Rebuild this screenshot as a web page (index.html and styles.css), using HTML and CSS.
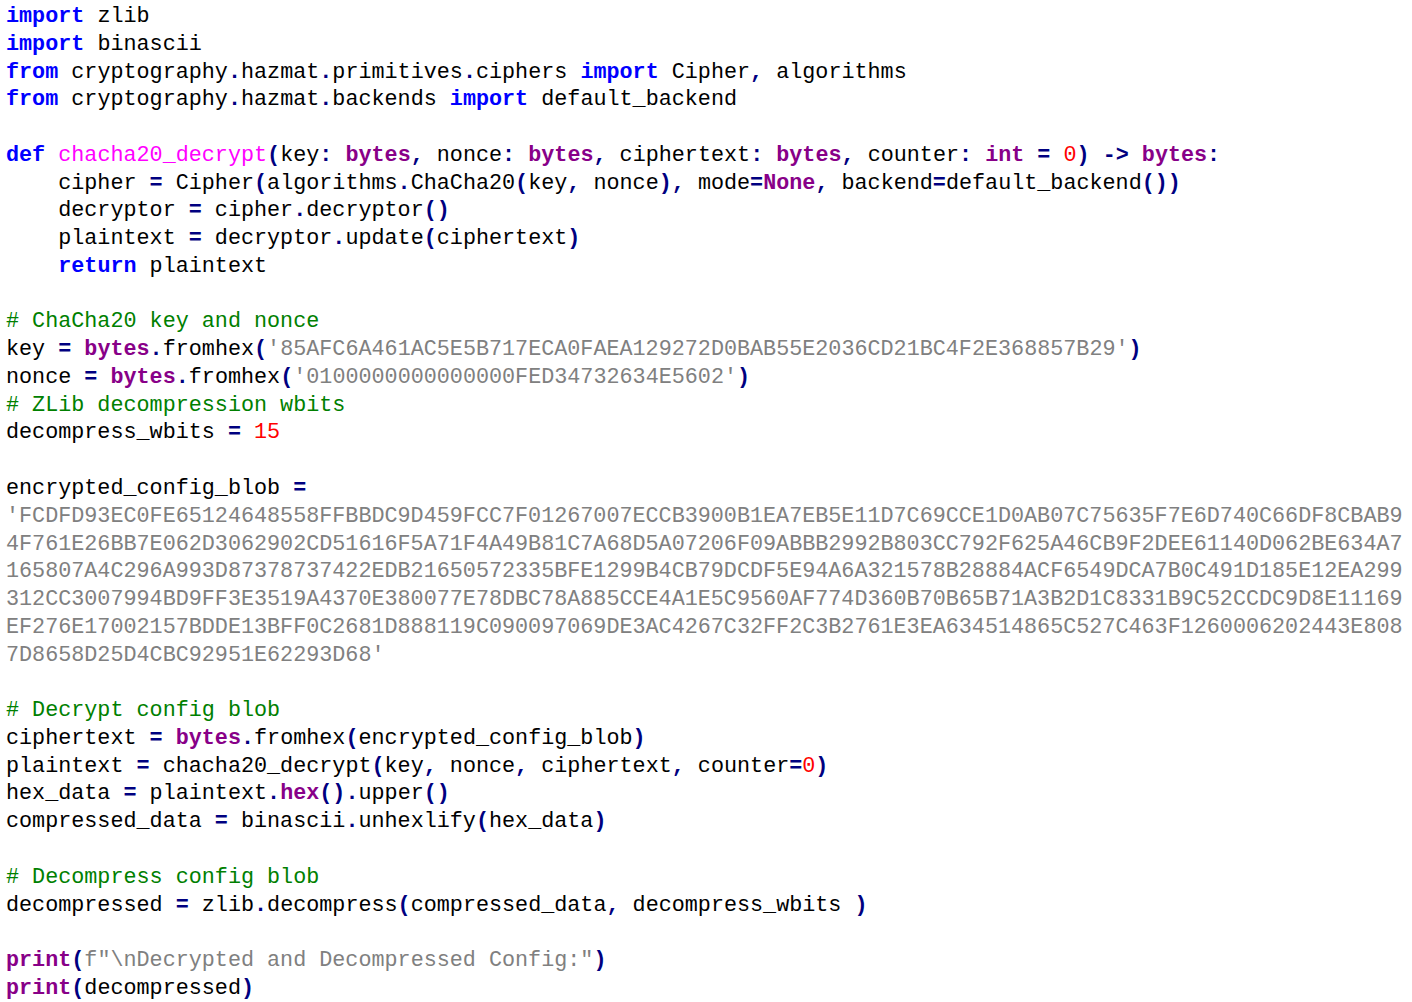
FILE: index.html
```html
<!DOCTYPE html>
<html lang="en">
<head>
<meta charset="utf-8">
<title>chacha20 config decrypt</title>
<link rel="stylesheet" href="styles.css">
</head>
<body>
<pre class="code"><span class="k">import</span> zlib
<span class="k">import</span> binascii
<span class="k">from</span> cryptography<span class="o">.</span>hazmat<span class="o">.</span>primitives<span class="o">.</span>ciphers <span class="k">import</span> Cipher<span class="o">,</span> algorithms
<span class="k">from</span> cryptography<span class="o">.</span>hazmat<span class="o">.</span>backends <span class="k">import</span> default_backend

<span class="k">def</span> <span class="f">chacha20_decrypt</span><span class="o">(</span>key<span class="o">:</span> <span class="b">bytes</span><span class="o">,</span> nonce<span class="o">:</span> <span class="b">bytes</span><span class="o">,</span> ciphertext<span class="o">:</span> <span class="b">bytes</span><span class="o">,</span> counter<span class="o">:</span> <span class="b">int</span> <span class="o">=</span> <span class="n">0</span><span class="o">)</span> <span class="o">-&gt;</span> <span class="b">bytes</span><span class="o">:</span>
    cipher <span class="o">=</span> Cipher<span class="o">(</span>algorithms<span class="o">.</span>ChaCha20<span class="o">(</span>key<span class="o">,</span> nonce<span class="o">),</span> mode<span class="o">=</span><span class="b">None</span><span class="o">,</span> backend<span class="o">=</span>default_backend<span class="o">())</span>
    decryptor <span class="o">=</span> cipher<span class="o">.</span>decryptor<span class="o">()</span>
    plaintext <span class="o">=</span> decryptor<span class="o">.</span>update<span class="o">(</span>ciphertext<span class="o">)</span>
    <span class="k">return</span> plaintext

<span class="c"># ChaCha20 key and nonce</span>
key <span class="o">=</span> <span class="b">bytes</span><span class="o">.</span>fromhex<span class="o">(</span><span class="s">'85AFC6A461AC5E5B717ECA0FAEA129272D0BAB55E2036CD21BC4F2E368857B29'</span><span class="o">)</span>
nonce <span class="o">=</span> <span class="b">bytes</span><span class="o">.</span>fromhex<span class="o">(</span><span class="s">'0100000000000000FED34732634E5602'</span><span class="o">)</span>
<span class="c"># ZLib decompression wbits</span>
decompress_wbits <span class="o">=</span> <span class="n">15</span>

encrypted_config_blob <span class="o">=</span>
<span class="s">'FCDFD93EC0FE65124648558FFBBDC9D459FCC7F01267007ECCB3900B1EA7EB5E11D7C69CCE1D0AB07C75635F7E6D740C66DF8CBAB9
4F761E26BB7E062D3062902CD51616F5A71F4A49B81C7A68D5A07206F09ABBB2992B803CC792F625A46CB9F2DEE61140D062BE634A7
165807A4C296A993D87378737422EDB21650572335BFE1299B4CB79DCDF5E94A6A321578B28884ACF6549DCA7B0C491D185E12EA299
312CC3007994BD9FF3E3519A4370E380077E78DBC78A885CCE4A1E5C9560AF774D360B70B65B71A3B2D1C8331B9C52CCDC9D8E11169
EF276E17002157BDDE13BFF0C2681D888119C090097069DE3AC4267C32FF2C3B2761E3EA634514865C527C463F1260006202443E808
7D8658D25D4CBC92951E62293D68'</span>

<span class="c"># Decrypt config blob</span>
ciphertext <span class="o">=</span> <span class="b">bytes</span><span class="o">.</span>fromhex<span class="o">(</span>encrypted_config_blob<span class="o">)</span>
plaintext <span class="o">=</span> chacha20_decrypt<span class="o">(</span>key<span class="o">,</span> nonce<span class="o">,</span> ciphertext<span class="o">,</span> counter<span class="o">=</span><span class="n">0</span><span class="o">)</span>
hex_data <span class="o">=</span> plaintext<span class="o">.</span><span class="b">hex</span><span class="o">().</span>upper<span class="o">()</span>
compressed_data <span class="o">=</span> binascii<span class="o">.</span>unhexlify<span class="o">(</span>hex_data<span class="o">)</span>

<span class="c"># Decompress config blob</span>
decompressed <span class="o">=</span> zlib<span class="o">.</span>decompress<span class="o">(</span>compressed_data<span class="o">,</span> decompress_wbits <span class="o">)</span>

<span class="b">print</span><span class="o">(</span><span class="s">f"\nDecrypted and Decompressed Config:"</span><span class="o">)</span>
<span class="b">print</span><span class="o">(</span>decompressed<span class="o">)</span></pre>
</body>
</html>
```
FILE: styles.css
```css
html, body {
  margin: 0;
  padding: 0;
  background: #ffffff;
}

.code {
  margin: 0;
  padding: 3px 0 0 6px;
  font-family: "Liberation Mono", "Courier New", monospace;
  font-size: 21.75px;
  line-height: 27.77px;
  color: #000000;
  white-space: pre;
}

.k { color: #0000ff; font-weight: bold; }
.b { color: #880088; font-weight: bold; }
.f { color: #ff00ff; }
.s { color: #808080; }
.n { color: #ff0000; }
.c { color: #008000; }
.o { color: #000080; font-weight: bold; }
```
